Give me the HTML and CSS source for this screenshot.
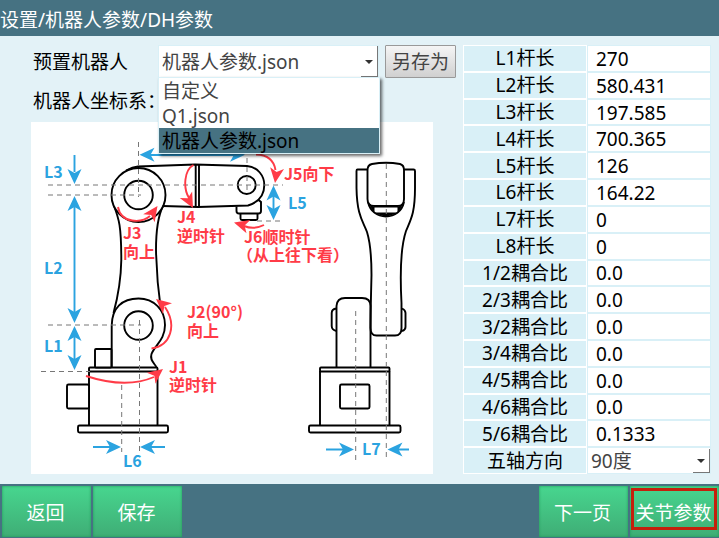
FILE: index.html
```html
<!DOCTYPE html>
<html lang="zh-CN">
<head>
<meta charset="utf-8">
<meta name="viewport" content="width=device-width, initial-scale=1">
<title>DH参数</title>
<link rel="stylesheet" href="styles.css">
</head>
<body>
<header class="titlebar"><h1>设置/机器人参数/DH参数</h1></header>

<main class="content">
  <section class="robot">
    <div class="preset">
      <label class="preset-label" for="preset">预置机器人</label>
      <div class="combo">
        <select id="preset">
          <option>自定义</option>
          <option>Q1.json</option>
          <option selected>机器人参数.json</option>
        </select>
        <ul class="menu" role="listbox" aria-label="预置机器人">
          <li role="option">自定义</li>
          <li role="option">Q1.json</li>
          <li role="option" class="selected" aria-selected="true">机器人参数.json</li>
        </ul>
      </div>
      <button class="save-as" type="button">另存为</button>
    </div>
    <h2 class="frame-label">机器人坐标系：</h2>
    <figure class="diagram">
      <svg viewBox="31 122 402 352" role="img" aria-label="机器人坐标系">
        <defs>
          <path id="head" d="M0 0L-15 -7L-11 0L-15 7Z"/>
        </defs>

        <!-- side view -->
        <g class="body">
          <path d="M89 371V425M157.500 371V425"/>
          <rect x="89" y="367.500" width="68.500" height="4" rx="1"/>
          <rect x="95" y="349" width="16.500" height="18.500" rx="1"/>
          <rect x="67" y="384.500" width="22" height="24" rx="1.500"/>
          <rect x="78" y="425.500" width="90" height="7" rx="1.500"/>
          <path d="M111.700 367V325.500C112 308 122 298.500 138.500 298.500C154 298.500 165 310 165 325C165 340 155 345 151.500 354C149.500 360 154 363 156.500 367"/>
          <circle cx="138.500" cy="325.500" r="14.300"/>
          <path d="M114 206C119 219 121.300 226 121.300 260C121 278 119 293 113.500 313"/>
          <path d="M163 206C157.500 217 156 230 156 250C156.500 275 158 290 161 311"/>
          <circle cx="138.500" cy="195" r="27"/>
          <circle cx="138.500" cy="195" r="14.300"/>
          <path d="M126 170.500C131 168 134 167 138 166.500L195 164.500L247 166C258 167 264.300 176 264.300 185C264.300 197 256 203 248 205.500L198 207L162.500 206"/>
          <path d="M195.700 165V207M199 165V207"/>
          <circle cx="246.700" cy="185" r="9"/>
          <path d="M236.500 206.500V211Q236.500 213.500 239 213.500H258.500Q261 213.500 261 211V202L258 199.500M240.500 214V218.500Q240.500 220 242 220H256Q257.500 220 257.500 218.500V214"/>
        </g>

        <!-- front view -->
        <g class="body">
          <path d="M320 371V425M389.500 371V425"/>
          <rect x="320" y="367.500" width="69.500" height="4" rx="1"/>
          <rect x="340" y="384.500" width="29.500" height="24" rx="1.500"/>
          <rect x="309" y="425.500" width="91.500" height="7" rx="1.500"/>
          <path d="M336.500 367V306Q337 298 345 298H362Q370.500 298 370.500 306V367"/>
          <path d="M336.500 308.500Q331.700 309 331.700 313V326Q331.700 330 336.500 331M402 308.500Q405.500 310 405.500 313V327Q405.500 330 402 331"/>
          <path d="M367.500 169.500H357.500Q356.500 169.500 356.500 171V188C357 216 363 221 367 232C371 245 371.500 262 371.500 275C371 295 370.500 315 370.500 328Q370.500 335.500 376.500 335.500H395Q401.500 335.500 401.500 328V303C400 275 401 246 406 231C411 219 415 213 415 188V171Q415 169.500 413.500 169.500H404"/>
          <path d="M367.500 170Q367.500 165 372 164Q386 161.500 400 164Q404 165 404 170V199Q404 206 398 206H374Q367.500 206 367.500 199Z"/>
          <path d="M368 202C370 211 377 216.500 386 216.500C395 216.500 402 211 404 202"/>
          <path class="fill" d="M369 204L374 207H398L403 204L398 213L386 217L374 213ZM374.500 207.500V212.500H397.500V207.500Z"/>
        </g>

        <g class="axis">
          <path d="M48 185H283M48 195H141M48 325H141M41 371.500H90M138.500 142V197M139.500 320V452M121.700 385V452M247 158V190M257 221H283"/>
          <path d="M355.700 311V460M386.300 164V460"/>
        </g>

        <g class="dim">
          <path d="M74.500 155V172M74.500 205V315M74.500 335V362M150 155H236M273.500 196V210M93 447H110M165 447H151M326 449.500H343M409 449.500H398"/>
          <use href="#head" transform="translate(74.500 184) rotate(90)"/>
          <use href="#head" transform="translate(74.500 196) rotate(-90)"/>
          <use href="#head" transform="translate(74.500 323) rotate(90)"/>
          <use href="#head" transform="translate(74.500 326) rotate(-90)"/>
          <use href="#head" transform="translate(74.500 370) rotate(90)"/>
          <use href="#head" transform="translate(139.500 154.700) rotate(180)"/>
          <use href="#head" transform="translate(245 154.700)"/>
          <use href="#head" transform="translate(273.500 185.500) rotate(-90)"/>
          <use href="#head" transform="translate(273.500 220) rotate(90)"/>
          <use href="#head" transform="translate(121 447)"/>
          <use href="#head" transform="translate(140 447) rotate(180)"/>
          <use href="#head" transform="translate(354 449.500)"/>
          <use href="#head" transform="translate(387.500 449.500) rotate(180)"/>
          <text x="44" y="178">L3</text>
          <text x="44" y="274">L2</text>
          <text x="44" y="352">L1</text>
          <text x="288" y="209">L5</text>
          <text x="123" y="467">L6</text>
          <text x="362" y="455">L7</text>
        </g>

        <g class="turn">
          <path d="M256 154.500Q273 155 275.500 170M193.500 165C184 170 183 188 189 198M118 207C121 224 142 223 150 216M264 225Q254 230 244 226M86 376Q126 389 154 377M151.500 348.500C171 346 177 325 165 307"/>
          <use href="#head" transform="translate(275 183) rotate(98)"/>
          <use href="#head" transform="translate(193 208) rotate(62)"/>
          <use href="#head" transform="translate(157.500 206) rotate(-55)"/>
          <use href="#head" transform="translate(234 222.500) rotate(196)"/>
          <use href="#head" transform="translate(163 369) rotate(-38)"/>
          <use href="#head" transform="translate(156 299) rotate(220)"/>
          <text x="284" y="180">J5向下</text>
          <text x="177" y="223">J4</text>
          <text x="177" y="242">逆时针</text>
          <text x="123" y="239">J3</text>
          <text x="123" y="258">向上</text>
          <text x="244" y="243">J6顺时针</text>
          <text x="237" y="261">（从上往下看）</text>
          <text x="187" y="318">J2(90°)</text>
          <text x="187" y="337">向上</text>
          <text x="169" y="373">J1</text>
          <text x="169" y="391">逆时针</text>
        </g>
      </svg>
    </figure>
  </section>

  <table class="params">
    <tbody>
      <tr><th scope="row"><label for="l1">L1杆长</label></th><td><input id="l1" type="text" value="270"></td></tr>
      <tr><th scope="row"><label for="l2">L2杆长</label></th><td><input id="l2" type="text" value="580.431"></td></tr>
      <tr><th scope="row"><label for="l3">L3杆长</label></th><td><input id="l3" type="text" value="197.585"></td></tr>
      <tr><th scope="row"><label for="l4">L4杆长</label></th><td><input id="l4" type="text" value="700.365"></td></tr>
      <tr><th scope="row"><label for="l5">L5杆长</label></th><td><input id="l5" type="text" value="126"></td></tr>
      <tr><th scope="row"><label for="l6">L6杆长</label></th><td><input id="l6" type="text" value="164.22"></td></tr>
      <tr><th scope="row"><label for="l7">L7杆长</label></th><td><input id="l7" type="text" value="0"></td></tr>
      <tr><th scope="row"><label for="l8">L8杆长</label></th><td><input id="l8" type="text" value="0"></td></tr>
      <tr><th scope="row"><label for="c12">1/2耦合比</label></th><td><input id="c12" type="text" value="0.0"></td></tr>
      <tr><th scope="row"><label for="c23">2/3耦合比</label></th><td><input id="c23" type="text" value="0.0"></td></tr>
      <tr><th scope="row"><label for="c32">3/2耦合比</label></th><td><input id="c32" type="text" value="0.0"></td></tr>
      <tr><th scope="row"><label for="c34">3/4耦合比</label></th><td><input id="c34" type="text" value="0.0"></td></tr>
      <tr><th scope="row"><label for="c45">4/5耦合比</label></th><td><input id="c45" type="text" value="0.0"></td></tr>
      <tr><th scope="row"><label for="c46">4/6耦合比</label></th><td><input id="c46" type="text" value="0.0"></td></tr>
      <tr><th scope="row"><label for="c56">5/6耦合比</label></th><td><input id="c56" type="text" value="0.1333"></td></tr>
      <tr><th scope="row"><label for="axis5">五轴方向</label></th><td><div class="combo"><select id="axis5"><option>90度</option></select></div></td></tr>
    </tbody>
  </table>
</main>

<footer class="actions">
  <button type="button">返回</button>
  <button type="button">保存</button>
  <span class="spacer"></span>
  <button type="button">下一页</button>
  <button type="button" class="marked">关节参数</button>
</footer>
</body>
</html>
```
FILE: styles.css
```css
* {
  box-sizing: border-box;
}

body {
  margin: 0;
  min-height: 100vh;
  display: flex;
  flex-direction: column;
  background: #e3f2f7;
  color: #000;
  font: 19px/25px "Noto Sans", "Noto Sans CJK SC", sans-serif;
}

button,
input,
select {
  margin: 0;
  font: inherit;
  border-radius: 0;
}

.titlebar {
  padding: 8px 0 3px;
  background: #467282;
}

.titlebar h1 {
  margin: 0;
  color: #fff;
  font-size: 19px;
  font-weight: 400;
}

.content {
  flex: 1;
  display: grid;
  grid-template-columns: 425fr 248fr;
  gap: 7px;
  padding: 9px 8px 10px 31px;
}

.preset {
  display: flex;
  align-items: stretch;
  height: 33px;
}

.preset-label {
  width: 127px;
  padding: 5px 2px 3px;
}

.combo {
  position: relative;
  display: flex;
  flex: 1;
  border: 1px solid #d9f0f7;
  background: #fff;
}

.combo select {
  flex: 1;
  min-width: 0;
  appearance: none;
  border: 0;
  padding: 2px 18px 0 3px;
  background: transparent;
  color: #444;
}

.combo::before {
  content: "";
  position: absolute;
  right: 0;
  top: 0;
  bottom: 0;
  width: 16px;
  border: solid #777;
  border-width: 0 1px 1px 0;
  pointer-events: none;
}

.combo::after {
  content: "";
  position: absolute;
  right: 5px;
  top: calc(50% - 2px);
  border: 4px solid transparent;
  border-top-color: #333;
  border-bottom: 0;
  pointer-events: none;
}

.menu {
  position: absolute;
  top: 100%;
  left: -1px;
  right: -2px;
  margin: 0;
  padding: 0;
  border: 1px solid #d9f0f7;
  background: #fff;
  box-shadow: 2px 2px 3px rgba(0, 0, 0, 0.6);
  color: #444;
  list-style: none;
  z-index: 1;
}

.menu li {
  padding: 1px 3px 0;
  line-height: 24px;
}

.menu .selected {
  background: #467282;
  color: #000;
}

.save-as {
  width: 71px;
  margin-left: 6px;
  padding: 2px 0 0;
  border: 1px solid #999;
  border-radius: 1px;
  background: linear-gradient(#f5f5f5, #d0d0d0);
  color: #444;
}

.frame-label {
  margin: 11px 0 8px;
  padding-left: 2px;
  font-size: 19px;
  font-weight: 400;
}

.diagram {
  margin: 0 23px 0 0;
  background: #fff;
}

.diagram svg {
  display: block;
  width: 100%;
}

.body {
  fill: #fff;
  stroke: #000;
  stroke-width: 1.9;
}

.body path {
  fill: none;
}

.body .fill {
  fill: #000;
  fill-rule: evenodd;
  stroke: none;
}

.axis {
  fill: none;
  stroke: #777;
  stroke-dasharray: 5 4;
}

.dim,
.turn {
  font-family: "Noto Sans CJK SC", sans-serif;
  font-size: 16px;
  font-weight: 700;
}

.dim > path,
.turn > path {
  fill: none;
  stroke-width: 1.9;
}

.dim > path {
  stroke: #2ba3e0;
}

.turn > path {
  stroke: #ff3b47;
}

.dim {
  fill: #2ba3e0;
}

.turn {
  fill: #ff3b47;
}

.params {
  width: 100%;
  height: 100%;
  border-collapse: separate;
  border-spacing: 0;
  table-layout: fixed;
  line-height: 23px;
}

.params th {
  padding: 1px 0 0;
  border: 1px solid #fff;
  background: #d9f0f7;
  font-weight: 400;
}

.params td {
  padding: 0;
  border: 1px solid #d9f0f7;
  background: #fff;
}

.params input {
  display: block;
  width: 100%;
  height: 24px;
  padding: 1px 8px 0;
  border: 0;
  background: transparent;
  color: #000;
}

.params .combo {
  height: 24px;
  border: 0;
}

.params select {
  padding: 1px 18px 0 3px;
}

.actions {
  display: flex;
  gap: 2px;
  padding: 2px 0 1px 2px;
  background: #467282;
}

.spacer {
  flex: 1;
}

.actions button {
  position: relative;
  width: 89px;
  height: 51px;
  padding: 4px 2px 0 0;
  border: 0;
  background: linear-gradient(#47d68f, #3fad75);
  box-shadow: inset 0 0 3px #1d9a56;
  color: #fff;
  white-space: nowrap;
}

.marked::after {
  content: "";
  position: absolute;
  inset: 2px 2px 7px 1px;
  border: 3px solid #c4200c;
}
```
